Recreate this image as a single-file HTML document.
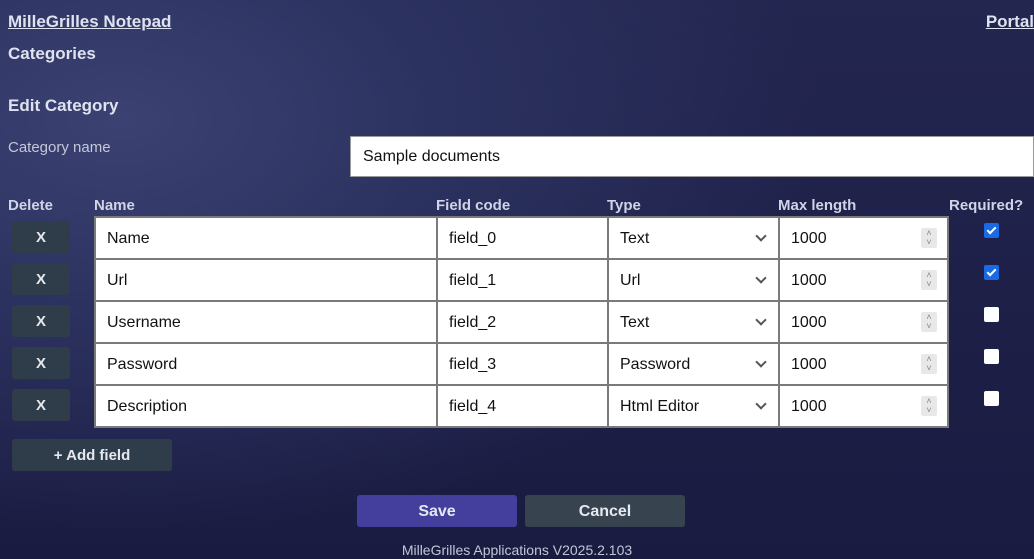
<!DOCTYPE html>
<html><head><meta charset="utf-8"><style>
*{box-sizing:border-box;margin:0;padding:0}
body{width:1034px;height:559px;overflow:hidden;position:relative;font-family:"Liberation Sans",sans-serif;color:#d8dcec;
background:radial-gradient(ellipse 700px 420px at 120px 120px,#3b4272 0%,#2c3260 45%,rgba(30,32,72,0) 100%),linear-gradient(180deg,#23264f 0%,#1d1f47 60%,#1a1b40 100%);}
.a{position:absolute}
.h{font-weight:bold;font-size:17px;color:#dfe2ef}
.lbl{font-weight:bold;font-size:15px;color:#d0d4e6}
.cell{position:absolute;background:#fff;border:2px solid #7a7a7a;height:44px;font-size:16px;color:#111;padding:0 0 0 11px;line-height:42px}
.del{position:absolute;left:12px;width:58px;height:32px;background:#2f3d4a;border-radius:3px;color:#e6e8ee;font-weight:bold;font-size:15px;text-align:center;line-height:33px}
.chev{position:absolute;right:13px;top:14px;width:8px;height:8px;border-right:2px solid #555;border-bottom:2px solid #555;transform:rotate(45deg)}
.spin{position:absolute;right:10px;top:10px;width:16px;height:20px;background:#e8e8e8;border-radius:2px;font-size:9px;line-height:9px;color:#888;text-align:center;padding-top:1px}
.cb{position:absolute;left:984px;width:15px;height:15px;border-radius:2px;background:#fff}
.cb.on{background:#1a6ae6}
.cb.on:after{content:"";position:absolute;left:5px;top:2px;width:3px;height:7px;border:solid #fff;border-width:0 2px 2px 0;transform:rotate(45deg)}
.btn{position:absolute;height:32px;border-radius:3px;color:#e6e8f0;font-weight:bold;font-size:16px;text-align:center;line-height:33px}
</style></head><body>
<div class="a h" style="left:8px;top:12px;text-decoration:underline">MilleGrilles Notepad</div>
<div class="a h" style="right:0;top:12px;text-decoration:underline">Portal</div>
<div class="a h" style="left:8px;top:44px">Categories</div>
<div class="a h" style="left:8px;top:96px">Edit Category</div>
<div class="a" style="left:8px;top:139px;font-size:15px;color:#c4c8da">Category name</div>
<div class="a" style="left:350px;top:136px;width:684px;height:41px;background:#fff;border:1px solid #999;font-size:16px;color:#111;line-height:40px;padding-left:12px">Sample documents</div>
<div class="a lbl" style="left:8px;top:197px">Delete</div>
<div class="a lbl" style="left:94px;top:197px">Name</div>
<div class="a lbl" style="left:436px;top:197px">Field code</div>
<div class="a lbl" style="left:607px;top:197px">Type</div>
<div class="a lbl" style="left:778px;top:197px">Max length</div>
<div class="a lbl" style="left:949px;top:197px">Required?</div>

<div class="del" style="top:221px">X</div>
<div class="cell" style="left:94px;top:216px;width:344px">Name</div>
<div class="cell" style="left:436px;top:216px;width:173px">field_0</div>
<div class="cell" style="left:607px;top:216px;width:173px">Text<span class="chev"></span></div>
<div class="cell" style="left:778px;top:216px;width:171px">1000<span class="spin">˄<br>˅</span></div>
<div class="cb on" style="top:223px"></div>

<div class="del" style="top:263px">X</div>
<div class="cell" style="left:94px;top:258px;width:344px">Url</div>
<div class="cell" style="left:436px;top:258px;width:173px">field_1</div>
<div class="cell" style="left:607px;top:258px;width:173px">Url<span class="chev"></span></div>
<div class="cell" style="left:778px;top:258px;width:171px">1000<span class="spin">˄<br>˅</span></div>
<div class="cb on" style="top:265px"></div>

<div class="del" style="top:305px">X</div>
<div class="cell" style="left:94px;top:300px;width:344px">Username</div>
<div class="cell" style="left:436px;top:300px;width:173px">field_2</div>
<div class="cell" style="left:607px;top:300px;width:173px">Text<span class="chev"></span></div>
<div class="cell" style="left:778px;top:300px;width:171px">1000<span class="spin">˄<br>˅</span></div>
<div class="cb" style="top:307px"></div>

<div class="del" style="top:347px">X</div>
<div class="cell" style="left:94px;top:342px;width:344px">Password</div>
<div class="cell" style="left:436px;top:342px;width:173px">field_3</div>
<div class="cell" style="left:607px;top:342px;width:173px">Password<span class="chev"></span></div>
<div class="cell" style="left:778px;top:342px;width:171px">1000<span class="spin">˄<br>˅</span></div>
<div class="cb" style="top:349px"></div>

<div class="del" style="top:389px">X</div>
<div class="cell" style="left:94px;top:384px;width:344px">Description</div>
<div class="cell" style="left:436px;top:384px;width:173px">field_4</div>
<div class="cell" style="left:607px;top:384px;width:173px">Html Editor<span class="chev"></span></div>
<div class="cell" style="left:778px;top:384px;width:171px">1000<span class="spin">˄<br>˅</span></div>
<div class="cb" style="top:391px"></div>

<div class="btn" style="left:12px;top:439px;width:160px;background:#2f3d4a;font-size:15px">+ Add field</div>
<div class="btn" style="left:357px;top:495px;width:160px;background:#443f9c">Save</div>
<div class="btn" style="left:525px;top:495px;width:160px;background:#37444f">Cancel</div>
<div class="a" style="left:0;width:1034px;top:542px;text-align:center;font-size:14px;color:#c2c6d6">MilleGrilles Applications V2025.2.103</div>
</body></html>
